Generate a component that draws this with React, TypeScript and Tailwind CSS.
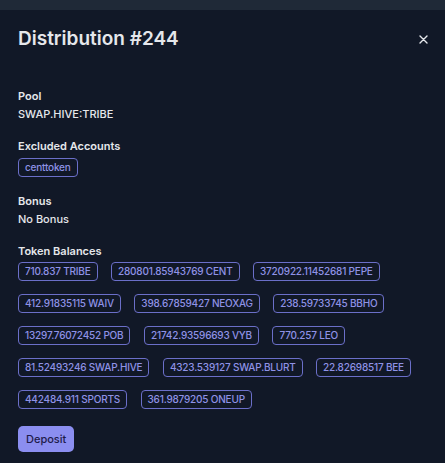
import React from "react";

const balances = [
  "710.837 TRIBE",
  "280801.85943769 CENT",
  "3720922.11452681 PEPE",
  "412.91835115 WAIV",
  "398.67859427 NEOXAG",
  "238.59733745 BBHO",
  "13297.76072452 POB",
  "21742.93596693 VYB",
  "770.257 LEO",
  "81.52493246 SWAP.HIVE",
  "4323.539127 SWAP.BLURT",
  "22.82698517 BEE",
  "442484.911 SPORTS",
  "361.9879205 ONEUP",
];

function Badge({ label }: { label: string }) {
  return (
    <span className="flex h-[19px] items-center rounded-[4px] border border-[#6b6fc9] px-[6px] text-[10px] font-medium tracking-[-0.02em] text-[#8f92e6] proportional-nums">
      {label}
    </span>
  );
}

export default function App() {
  return (
    <div className="min-h-[463px] bg-[#111827] font-['Inter',sans-serif] text-[#e5e7eb]">
      <div className="h-[10px] bg-[#1f2937]" />

      <div className="px-[18px] pt-[17px] pb-[11px]">
        <div className="flex items-center justify-between">
          <h2 className="text-[19px] font-semibold leading-[24px] text-[#e5e7eb]">
            Distribution #244
          </h2>
          <button className="mr-[-1px] text-[#e5e7eb]">
            <svg width="9" height="9" viewBox="0 0 9 9" fill="none">
              <path d="M1 1L8 8M8 1L1 8" stroke="currentColor" strokeWidth="1.4" strokeLinecap="round" />
            </svg>
          </button>
        </div>

        <div className="mt-[37px] flex flex-col gap-[16px]">
          <div>
            <div className="text-[11px] font-semibold leading-[16px]">Pool</div>
            <div className="mt-[2px] text-[11px] font-medium leading-[16px]">SWAP.HIVE:TRIBE</div>
          </div>

          <div>
            <div className="text-[11px] font-semibold leading-[16px]">Excluded Accounts</div>
            <div className="mt-[4px] flex">
              <Badge label="centtoken" />
            </div>
          </div>

          <div>
            <div className="text-[11px] font-semibold leading-[16px]">Bonus</div>
            <div className="mt-[2px] text-[11px] font-medium leading-[16px]">No Bonus</div>
          </div>

          <div>
            <div className="text-[11px] font-semibold leading-[16px]">Token Balances</div>
            <div className="mt-[3px] flex flex-wrap gap-x-[13.5px] gap-y-[13px]">
              {balances.map((b) => (
                <Badge key={b} label={b} />
              ))}
            </div>
          </div>

          <div>
            <button className="h-[26px] rounded-[5px] bg-[#8b8ef0] px-[8px] text-[11px] font-medium text-[#1e1b4b]">
              Deposit
            </button>
          </div>
        </div>
      </div>
    </div>
  );
}
